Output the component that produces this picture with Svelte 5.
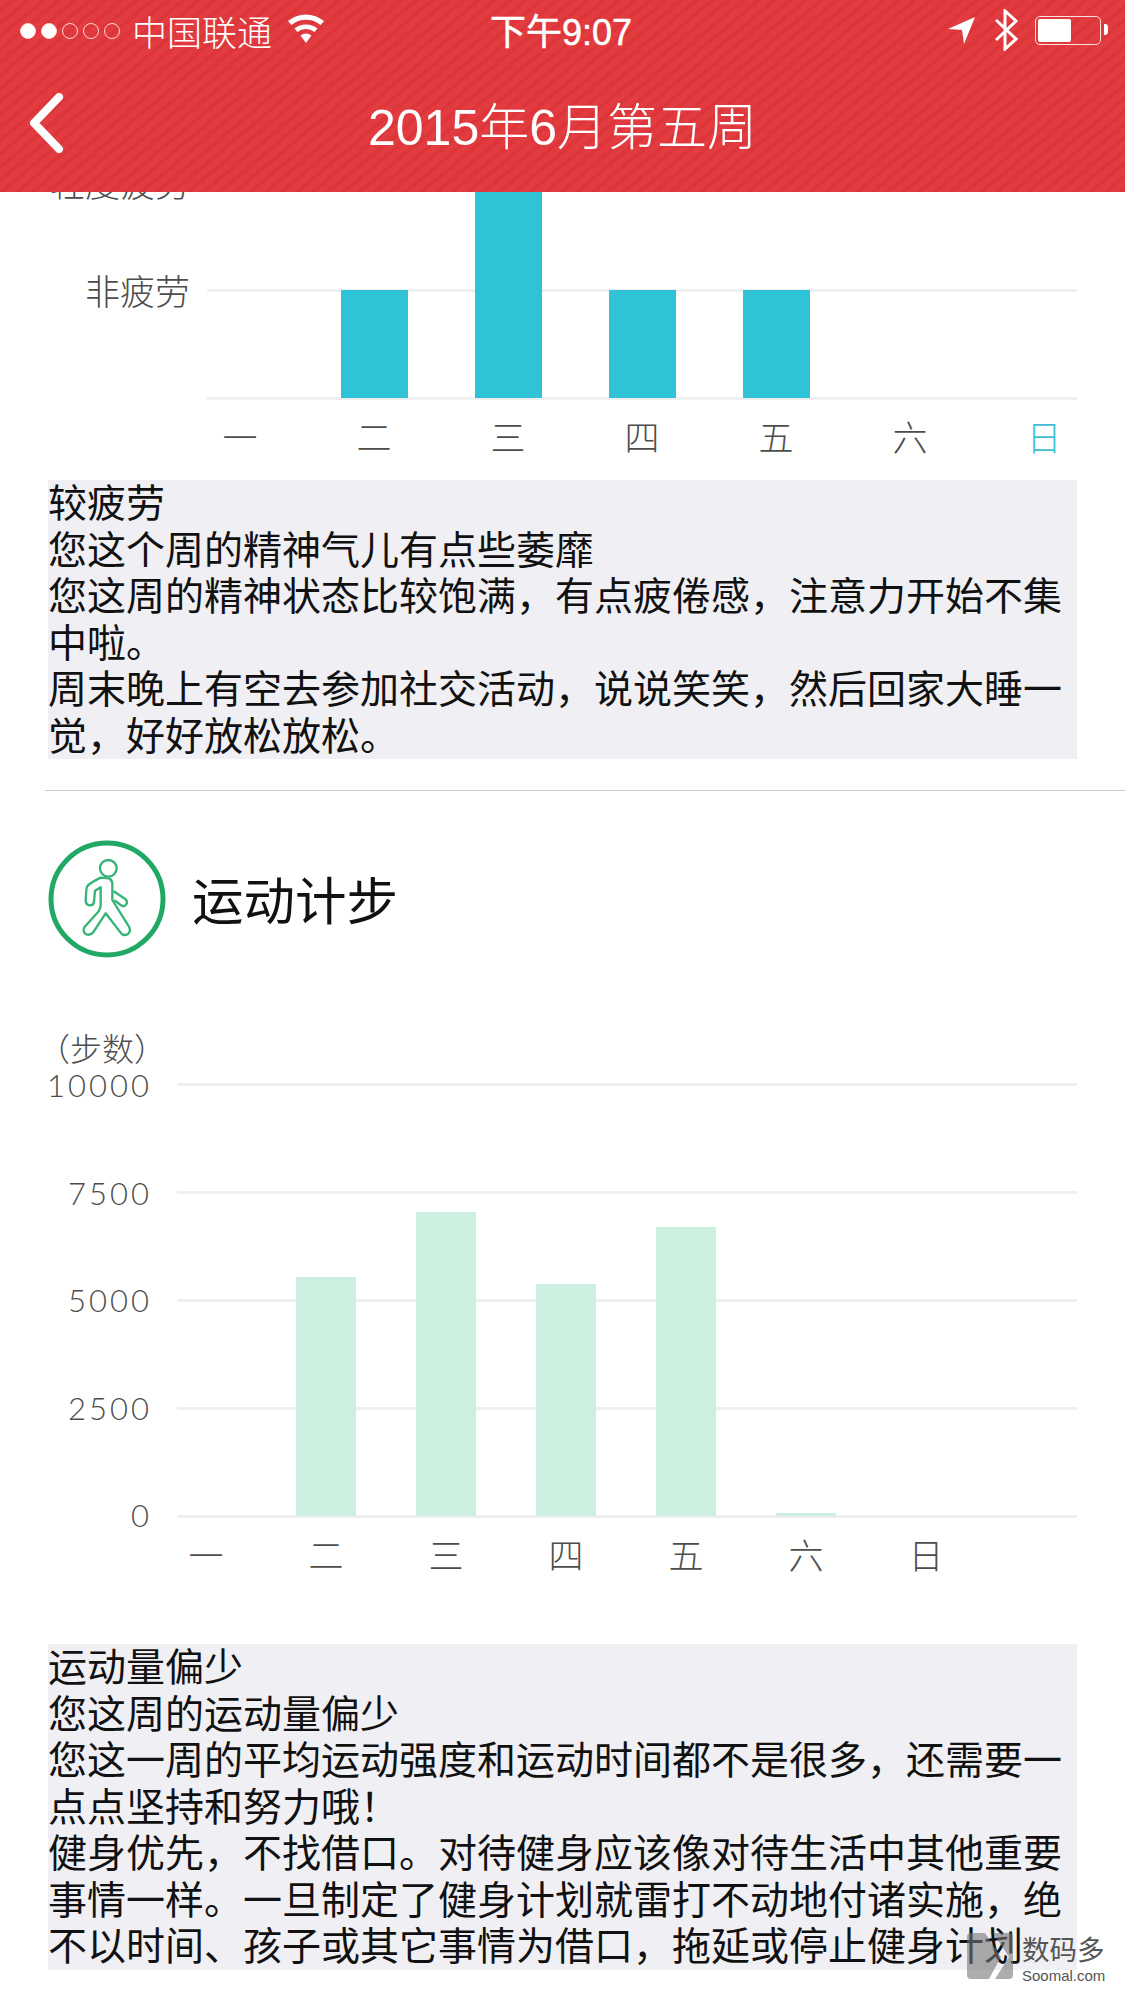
<script>
  const fatigueDays = ['一', '二', '三', '四', '五', '六', '日'];
  const fatigueBars = [0, 108, 250, 108, 108, 0, 0];
  const stepBars = [0, 239, 304, 232, 289, 3, 0];
  const stepTicks = ['10000', '7500', '5000', '2500', '0'];
  const sleepText = [
    '较疲劳',
    '您这个周的精神气儿有点些萎靡',
    '您这周的精神状态比较饱满，有点疲倦感，注意力开始不集中啦。',
    '周末晚上有空去参加社交活动，说说笑笑，然后回家大睡一觉，好好放松放松。'
  ];
  const stepText = [
    '运动量偏少',
    '您这周的运动量偏少',
    '您这一周的平均运动强度和运动时间都不是很多，还需要一点点坚持和努力哦！',
    '健身优先，不找借口。对待健身应该像对待生活中其他重要事情一样。一旦制定了健身计划就雷打不动地付诸实施，绝不以时间、孩子或其它事情为借口，拖延或停止健身计划'
  ];
</script>

<div class="page">
  <header class="top">
    <div class="status">
      <div class="dots">
        <i class="on"></i><i class="on"></i><i></i><i></i><i></i>
      </div>
      <span class="carrier">中国联通</span>
      <svg class="wifi" width="38" height="30" viewBox="0 0 38 30">
        <path d="M19 29 L13.5 21.5 A9 9 0 0 1 24.5 21.5 Z" fill="#fff"/>
        <path d="M10.5 18 A14 14 0 0 1 27.5 18 L30.5 14.5 A19 19 0 0 0 7.5 14.5 Z" fill="#fff"/>
        <path d="M4.5 11 A23 23 0 0 1 33.5 11 L37 7 A28 28 0 0 0 1 7 Z" fill="#fff"/>
      </svg>
      <span class="clock">下午9:07</span>
      <svg class="arrow" width="28" height="28" viewBox="0 0 28 28">
        <path d="M0 12 L27 0 L16 27 L14 13 Z" fill="#fff"/>
      </svg>
      <svg class="bt" width="24" height="42" viewBox="0 0 24 42">
        <path d="M2 11 L22 30 L11 40 V2 L22 12 L2 31" fill="none" stroke="#fff" stroke-width="3"/>
      </svg>
      <div class="battery"><div class="charge"></div></div>
    </div>
    <div class="nav">
      <svg class="back" width="36" height="60" viewBox="0 0 36 60">
        <path d="M31 4 L6 30 L31 56" fill="none" stroke="#fff" stroke-width="8" stroke-linecap="round" stroke-linejoin="round"/>
      </svg>
      <h1>2015年6月第五周</h1>
    </div>
  </header>

  <main class="scroll">
    <section class="sleep">
      <div class="chart fatigue">
        <div class="levels">
          <span>轻度疲劳</span>
          <span>非疲劳</span>
        </div>
        <div class="plot">
          <div class="grid"><b></b><b></b></div>
          <div class="bars">
            {#each fatigueBars as h}
              <div class="slot"><div class="bar" style="height:{h}px"></div></div>
            {/each}
          </div>
          <div class="days">
            {#each fatigueDays as d, i}
              <span class:today={i === 6}>{d}</span>
            {/each}
          </div>
        </div>
      </div>
      <div class="note">
        {#each sleepText as line}<p>{line}</p>{/each}
      </div>
    </section>

    <section class="steps">
      <div class="head">
        <svg width="118" height="118" viewBox="0 0 118 118">
          <circle cx="59" cy="59" r="56" fill="#fff" stroke="#22a865" stroke-width="5"/>
          <g transform="translate(11 10) scale(.3333)" fill="none" stroke="#36b377" stroke-width="7" stroke-linejoin="round" stroke-linecap="round">
            <circle cx="148" cy="55" r="25"/>
            <path d="M125 83 Q100 95 88 105 Q82 110 82 120 L80 150 Q80 165 92 166 Q104 167 105 155 L108 122 L125 112 L125 165 Q125 175 118 185 L76 232 Q70 245 80 252 Q92 258 102 248 L140 190 L185 248 Q195 260 207 252 Q217 243 210 230 L160 150 L160 100 Q158 88 150 85 Z"/>
            <path d="M166 125 L200 148 Q208 156 200 165 Q193 172 185 165 L168 152"/>
          </g>
        </svg>
        <h2>运动计步</h2>
      </div>

      <div class="chart pace">
        <div class="unit">（步数）</div>
        <div class="ticks">
          {#each stepTicks as t}<span>{t}</span>{/each}
        </div>
        <div class="plot">
          <div class="grid"><b></b><b></b><b></b><b></b><b></b></div>
          <div class="bars">
            {#each stepBars as h}
              <div class="slot"><div class="bar" style="height:{h}px"></div></div>
            {/each}
          </div>
          <div class="days">
            {#each fatigueDays as d}<span>{d}</span>{/each}
          </div>
        </div>
      </div>

      <div class="note">
        {#each stepText as line}<p>{line}</p>{/each}
      </div>
    </section>

    <div class="mark">
      <svg width="46" height="46" viewBox="0 0 46 46">
        <path d="M4 0 H18 L34 24 L22 46 H4 Q0 46 0 42 V4 Q0 0 4 0 Z" fill="#777" opacity=".6"/>
        <path d="M26 0 H42 Q46 0 46 4 V42 Q46 46 42 46 H28 L42 24 Z" fill="#777" opacity=".6"/>
      </svg>
      <div class="mark-text">
        <span class="mark-cn">数码多</span>
        <span class="mark-en">Soomal.com</span>
      </div>
    </div>
  </main>
</div>

<style>
  :global(body) {
    margin: 0;
    background: #fff;
  }

  .page {
    width: 1125px;
    height: 2001px;
    display: flex;
    flex-direction: column;
    overflow: hidden;
    font-family: "Noto Sans CJK SC", sans-serif;
  }

  .top {
    height: 192px;
    flex: none;
    position: relative;
    z-index: 2;
    color: #fff;
    background: repeating-linear-gradient(140deg, #e23c40 0 6px, #dc363a 6px 10px);
  }

  .status {
    height: 62px;
    display: flex;
    align-items: center;
    padding-left: 20px;
  }

  .dots {
    display: flex;
    gap: 5px;
  }

  .dots i {
    width: 16px;
    height: 16px;
    box-sizing: border-box;
    border: 1px solid #ffd5d5;
    border-radius: 50%;
  }

  .dots i.on {
    background: #fff;
  }

  .carrier {
    font-size: 35px;
    line-height: 62px;
    margin-left: 12px;
    font-weight: 300;
  }

  .wifi {
    margin-left: 15px;
    margin-bottom: 4px;
  }

  .clock {
    font-family: "Liberation Sans", "Noto Sans CJK SC", sans-serif;
    font-size: 36px;
    margin: 0 0 4px 165px;
    -webkit-text-stroke: 0.5px #fff;
  }

  .arrow {
    margin-left: 316px;
    margin-bottom: 1px;
  }

  .bt {
    margin-left: 18px;
    margin-right: 17px;
    margin-bottom: 2px;
  }

  .battery {
    width: 66px;
    height: 29px;
    box-sizing: border-box;
    border: 1.5px solid #ffdede;
    border-radius: 5px;
    padding: 2px;
    position: relative;
    margin-bottom: 2px;
  }

  .battery::after {
    content: "";
    position: absolute;
    right: -8px;
    top: 7px;
    width: 4px;
    height: 11px;
    background: #fff;
    border-radius: 0 3px 3px 0;
  }

  .charge {
    width: 33px;
    height: 100%;
    background: #fff;
    border-radius: 2px;
  }

  .nav {
    height: 130px;
    display: flex;
    align-items: center;
    justify-content: center;
    position: relative;
  }

  .back {
    position: absolute;
    left: 28px;
    top: 31px;
  }

  h1 {
    margin: 2px 0 0 0;
    font-family: "Liberation Sans", "Noto Sans CJK SC", sans-serif;
    font-size: 50px;
    font-weight: 300;
    line-height: 130px;
  }

  .scroll {
    flex: 1;
    position: relative;
    overflow: hidden;
  }

  .chart {
    position: relative;
    color: #4d4d4d;
  }

  .plot {
    position: relative;
  }

  .grid {
    position: absolute;
    left: 0;
    right: 0;
    display: flex;
    flex-direction: column;
    justify-content: space-between;
  }

  .grid b {
    display: block;
    height: 3px;
    background: #efeff0;
  }

  .bars {
    position: relative;
    display: grid;
    grid-template-columns: repeat(7, 1fr);
    grid-template-rows: 100%;
  }

  .slot {
    display: flex;
    justify-content: center;
    align-items: flex-end;
  }

  .days {
    display: grid;
    grid-template-columns: repeat(7, 1fr);
    text-align: center;
    font-size: 35px;
    font-weight: 300;
  }

  /* sleep chart, scrolled up under the header */
  .sleep {
    padding-left: 48px;
  }

  .fatigue {
    display: flex;
    width: 1029px;
    height: 288px;
  }

  .levels {
    width: 159px;
    flex: none;
    display: flex;
    flex-direction: column;
    align-items: flex-end;
    font-size: 35px;
    line-height: 46px;
    font-weight: 300;
    white-space: nowrap;
    padding-right: 17px;
    box-sizing: border-box;
    margin-top: -33px;
    gap: 62px;
  }

  .fatigue .plot {
    flex: 1;
    width: 870px;
  }

  .fatigue .grid {
    top: 97px;
    height: 111px;
  }

  .fatigue .bars {
    height: 206px;
    width: 938px;
    margin-left: -34px;
  }

  .fatigue .bar {
    width: 67px;
    background: #2fc3d7;
  }

  .fatigue .days {
    width: 938px;
    margin-left: -34px;
    margin-top: 12px;
    line-height: 52px;
  }

  .today {
    color: #3fc0d2;
  }

  .note {
    display: flow-root;
    width: 1029px;
    background: #efeff4;
    color: #111;
    font-size: 39px;
    line-height: 46.5px;
    font-weight: 400;
    padding-bottom: 3px;
  }

  .note p {
    margin: 0;
  }

  .note p:first-child {
    margin-top: -3px;
  }

  .steps {
    margin: 31px 0 0 45px;
    border-top: 1px solid #c8c8c8;
    padding-left: 3px;
  }

  .head {
    display: flex;
    align-items: center;
    gap: 26px;
    padding-top: 49px;
  }

  h2 {
    margin: 0 0 4px;
    font-size: 51.5px;
    font-weight: 400;
    color: #111;
  }

  .pace {
    width: 1029px;
    height: 686px;
    display: flex;
    flex-wrap: wrap;
    align-content: flex-start;
  }

  .unit {
    width: 100%;
    margin-top: 68px;
    height: 42px;
    line-height: 42px;
    font-size: 32px;
    font-weight: 300;
    text-indent: -10px;
  }

  .ticks {
    width: 129px;
    height: 470px;
    margin-top: -3px;
    display: flex;
    flex-direction: column;
    justify-content: space-between;
    align-items: flex-end;
    padding-right: 25px;
    box-sizing: border-box;
    font-family: Lato, "Noto Sans CJK SC", sans-serif;
    font-size: 31px;
    line-height: 40px;
    letter-spacing: 3px;
    font-weight: 300;
    flex: none;
  }

  .pace .plot {
    width: 900px;
    margin-top: 14.5px;
  }

  .pace .grid {
    top: 0;
    height: 435px;
  }

  .pace .bars {
    height: 433px;
    width: 840px;
    margin-left: -31px;
  }

  .pace .bar {
    width: 60px;
    background: #cdefdf;
  }

  .pace .days {
    width: 840px;
    margin-left: -31px;
    margin-top: 8px;
    line-height: 60px;
    font-size: 35px;
  }

  .mark {
    position: absolute;
    z-index: 1;
    left: 967px;
    top: 1741px;
    display: flex;
    gap: 9px;
    color: #555;
  }

  .mark-text {
    display: flex;
    flex-direction: column;
  }

  .mark-cn {
    font-size: 27.5px;
    line-height: 30px;
  }

  .mark-en {
    font-family: "Liberation Sans", sans-serif;
    font-size: 15px;
    line-height: 20px;
    margin-top: 3px;
  }
</style>
